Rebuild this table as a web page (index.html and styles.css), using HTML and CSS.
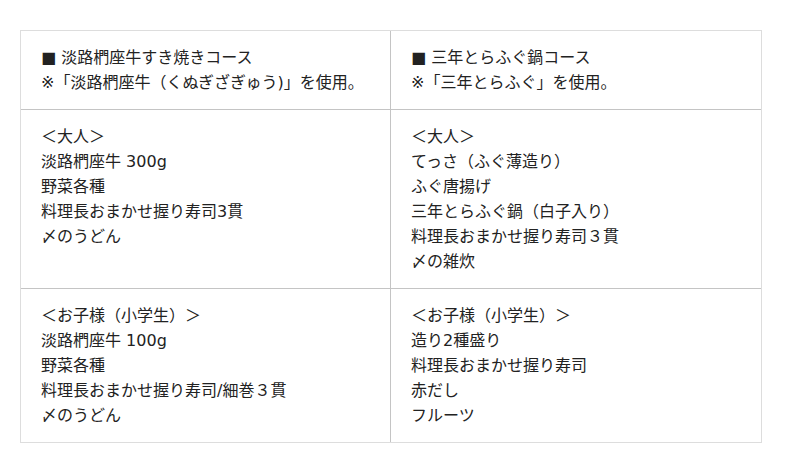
FILE: index.html
```html
<!DOCTYPE html>
<html lang="ja">
<head>
<meta charset="utf-8">
<link rel="stylesheet" href="styles.css">
</head>
<body>
<div class="wrap">
  <div class="menu">
    <div class="cell left">
      <p>■ 淡路椚座牛すき焼きコース</p>
      <p>※「淡路椚座牛（くぬぎざぎゅう)」を使用。</p>
    </div>
    <div class="cell">
      <p>■ 三年とらふぐ鍋コース</p>
      <p>※「三年とらふぐ」を使用。</p>
    </div>
    <div class="cell left">
      <p>＜大人＞</p>
      <p>淡路椚座牛 300g</p>
      <p>野菜各種</p>
      <p>料理長おまかせ握り寿司3貫</p>
      <p>〆のうどん</p>
    </div>
    <div class="cell">
      <p>＜大人＞</p>
      <p>てっさ（ふぐ薄造り）</p>
      <p>ふぐ唐揚げ</p>
      <p>三年とらふぐ鍋（白子入り）</p>
      <p>料理長おまかせ握り寿司３貫</p>
      <p>〆の雑炊</p>
    </div>
    <div class="cell left last">
      <p>＜お子様（小学生）＞</p>
      <p>淡路椚座牛 100g</p>
      <p>野菜各種</p>
      <p>料理長おまかせ握り寿司/細巻３貫</p>
      <p>〆のうどん</p>
    </div>
    <div class="cell last">
      <p>＜お子様（小学生）＞</p>
      <p>造り2種盛り</p>
      <p>料理長おまかせ握り寿司</p>
      <p>赤だし</p>
      <p>フルーツ</p>
    </div>
  </div>
</div>
</body>
</html>
```
FILE: styles.css
```css
html, body {
  margin: 0;
  padding: 0;
  background: #ffffff;
}
body {
  font-family: "DejaVu Sans", "Noto Sans CJK JP", sans-serif;
  font-size: 16px;
  line-height: 25px;
  color: #222222;
}
.wrap {
  padding: 30px 20px;
}
.menu {
  width: 742px;
  box-sizing: border-box;
  border: 1px solid #dddddd;
  display: grid;
  grid-template-columns: 1fr 1fr;
}
.cell {
  padding: 14px 20px;
  border-bottom: 1px solid #c4c4c4;
}
.cell.left {
  border-right: 1px solid #c4c4c4;
}
.cell.last {
  border-bottom: none;
}
.cell p {
  margin: 0;
  white-space: nowrap;
}
```
